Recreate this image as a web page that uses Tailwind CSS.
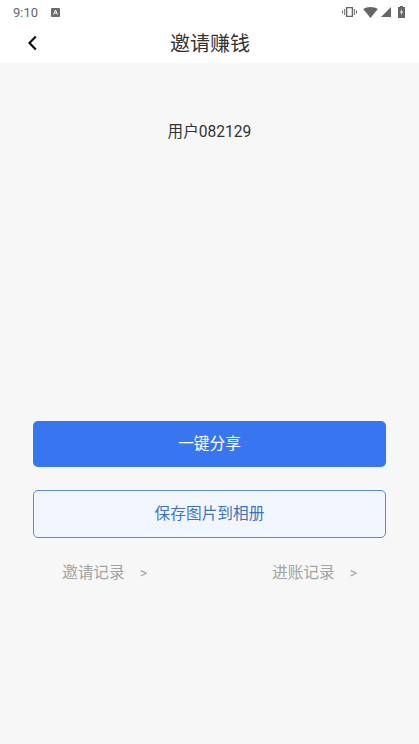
<!DOCTYPE html>
<html lang="zh-CN">
<head>
	<meta charset="utf-8">
	<meta name="viewport" content="width=device-width, initial-scale=1">
	<title>邀请赚钱</title>
	<script src="https://cdn.jsdelivr.net/npm/@tailwindcss/browser@4"></script>
</head>
<body class="bg-[#f7f7f7] overflow-hidden font-['Roboto','Noto_Sans_CJK_SC',sans-serif]">
	<div class="w-[419px] h-[744px] flex flex-col">
		<!-- status bar -->
		<div class="h-[24px] bg-white flex items-center justify-between pl-[13px] pr-[14px]">
			<div class="flex items-center gap-x-[13px]">
				<span class="text-[13px] leading-none text-[#666666]">9:10</span>
				<svg class="w-[9px] h-[9px]" viewBox="0 0 9 9">
					<rect width="9" height="9" rx="1" fill="#6b6b6b"/>
					<path d="M2.5 6.5 4.5 2l2 4.5M3.3 5h2.4" stroke="#fff" stroke-width="1" fill="none"/>
				</svg>
			</div>
			<div class="flex items-center">
				<svg class="w-[15px] h-[12px] mr-[6px]" viewBox="0 0 15 12" fill="#666666">
					<path d="M4 1h7v10H4zM5.3 2.3v7.4h4.4V2.3z" fill-rule="evenodd"/>
					<path d="M2.2 3h1v6h-1zM11.8 3h1v6h-1zM0 4.5h1v3H0zM14 4.5h1v3h-1z"/>
				</svg>
				<svg class="w-[15px] h-[11px] mr-[3px]" viewBox="0 0 16 12" fill="#666666">
					<path d="M0 2.2C2 .8 5 0 8 0s6 .8 8 2.2L8 12z"/>
				</svg>
				<svg class="w-[10px] h-[10px] mr-[7px]" viewBox="0 0 11 11" fill="#666666">
					<path d="M11 0v11H0z"/>
				</svg>
				<svg class="w-[7px] h-[12px]" viewBox="0 0 7 12">
					<path d="M2 0h3v1h2v11H0V1h2z" fill="#666666"/>
					<path d="M3.8 3 2 6.6h1.3L3 9.4l2-3.8H3.6z" fill="#fff"/>
				</svg>
			</div>
		</div>

		<!-- header -->
		<header class="h-[39px] bg-white relative flex items-center justify-center">
			<svg class="absolute left-[27px] top-[11px] w-[11px] h-[16px]" viewBox="0 0 11 16" fill="none">
				<path d="M8.8 1.5 2.5 8l6.3 6.5" stroke="#111111" stroke-width="2.2"/>
			</svg>
			<h1 class="pl-[1px] text-[20px] font-normal leading-none text-[#333333]">邀请赚钱</h1>
		</header>

		<main class="flex-1 flex flex-col">
			<p class="mt-[59px] text-center text-[15.6px] leading-[20px] text-[#333333]">用户082129</p>

			<div class="mt-[279px] ml-[33px] w-[353px] flex flex-col">
				<button class="h-[46px] rounded-[5px] bg-[#3776f0] text-white text-[15.7px]">一键分享</button>
				<button class="mt-[23px] h-[48px] rounded-[5px] border border-[#5b8ccb] bg-[#f1f6fe] text-[#3f74bd] text-[15.7px]">保存图片到相册</button>
			</div>

			<div class="mt-[25px] flex text-[15.7px] leading-[20px] text-[#a3a3a3]">
				<a class="ml-[62px] w-[210px] flex items-center">邀请记录<span class="ml-[15px] text-[14px]">&gt;</span></a>
				<a class="flex items-center">进账记录<span class="ml-[15px] text-[14px]">&gt;</span></a>
			</div>
		</main>
	</div>
</body>
</html>
